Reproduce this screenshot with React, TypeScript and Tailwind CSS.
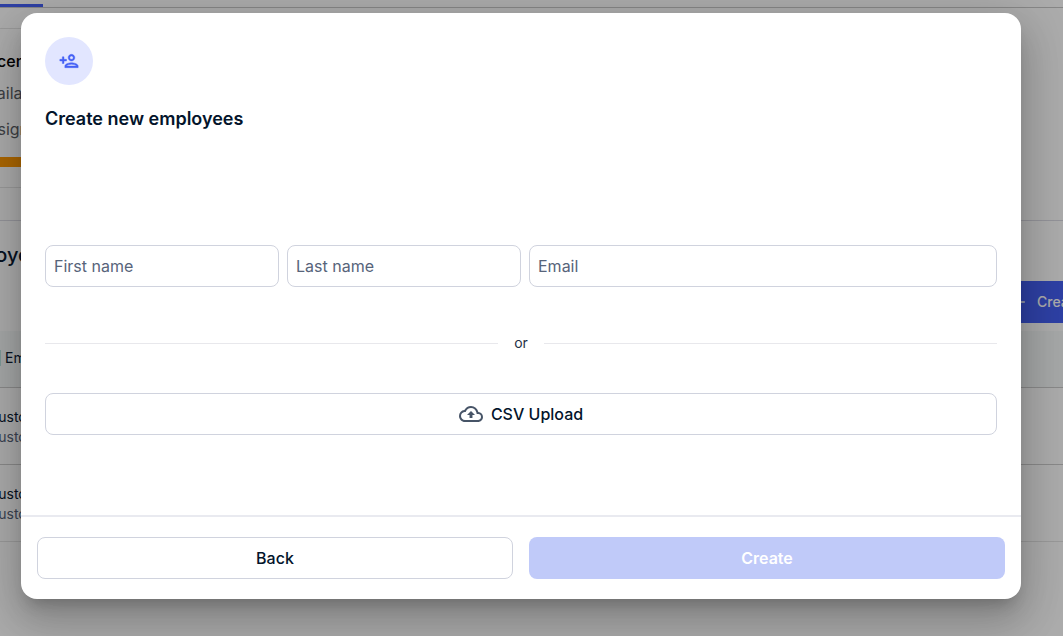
import { useState } from "react";
import { MdAdd, MdOutlineCloudUpload } from "react-icons/md";

const CUSTOMERS = [
  { id: 1, name: "Customer One", detail: "Customer account" },
  { id: 2, name: "Customer Two", detail: "Customer account" },
];

const inputClass =
  "h-[42px] w-full min-w-0 rounded-lg border border-[#d0d3de] bg-white px-2 text-[#0b1b33] placeholder:text-[#57647a] placeholder:opacity-100";

function PersonAddIcon() {
  return (
    <svg
      viewBox="0 0 24 24"
      className="size-5"
      fill="currentColor"
      stroke="currentColor"
      strokeWidth="0.5"
      aria-hidden="true"
    >
      <path d="M15 12c2.21 0 4-1.79 4-4s-1.79-4-4-4-4 1.79-4 4 1.79 4 4 4zm0-6c1.1 0 2 .9 2 2s-.9 2-2 2-2-.9-2-2 .9-2 2-2zm0 8c-2.67 0-8 1.34-8 4v2h16v-2c0-2.66-5.33-4-8-4zm-6 4c.22-.72 3.31-2 6-2 2.7 0 5.8 1.29 6 2H9zm-3-3v-3h3v-2H6V7H4v3H1v2h3v3h2z" />
    </svg>
  );
}

function EmployeesPage() {
  return (
    <div className="min-h-screen overflow-hidden bg-white text-[#0b1b33]">
      <div className="h-2 border-b border-[#c8c8c8]">
        <div className="h-[7px] w-[43px] border-b-[3px] border-[#4560f5]" />
      </div>

      <section className="mt-5 h-40 w-1/3 border-y border-[#e4e4e4] pt-5">
        <h2 className="-ml-4 text-base leading-6 font-medium text-black">Licenses</h2>
        <p className="-ml-[22px] mt-2 leading-6 text-[#5c5f66]">Available</p>
        <p className="-ml-[22px] mt-3 leading-6 text-[#5c5f66]">Assigned</p>
        <div className="mt-4 h-2.5 bg-[#ff9800]" />
      </section>

      <section className="mt-8 border-t border-[#dcdce4] pt-5">
        <h2 className="-ml-[52px] text-xl leading-7 font-medium">Employees</h2>
        <div className="mt-3 flex justify-end">
          <button
            type="button"
            className="flex h-[42px] w-[70px] items-center gap-2 overflow-hidden bg-[#4560f5] pl-4 font-medium text-white"
          >
            <MdAdd className="size-5 shrink-0" />
            <span className="text-sm">Create</span>
          </button>
        </div>
        <table className="mt-2 w-full text-left text-sm">
          <thead className="h-14 border-b border-[#cdcdcd] bg-[#f6faf9]">
            <tr>
              <th className="pb-0.5 font-normal">
                <div className="border-l border-[#b9e4e2] pl-1 leading-4">Employee</div>
              </th>
            </tr>
          </thead>
          <tbody>
            {CUSTOMERS.map((customer) => (
              <tr key={customer.id} className="h-[77px] border-b border-[#cdcdcd] last:border-[#e4e4e4]">
                <td className="pt-0.5">
                  <div className="-ml-3 leading-5">{customer.name}</div>
                  <div className="-ml-3 leading-5 text-[#57647a]">{customer.detail}</div>
                </td>
              </tr>
            ))}
          </tbody>
        </table>
      </section>
    </div>
  );
}

function CreateEmployeesDialog() {
  const [firstName, setFirstName] = useState("");
  const [lastName, setLastName] = useState("");
  const [email, setEmail] = useState("");

  return (
    <div
      role="dialog"
      aria-modal="true"
      aria-labelledby="dialog-title"
      className="w-full max-w-[1000px] rounded-2xl bg-white text-[#03142b] shadow-[0_11px_15px_-7px_rgba(0,0,0,0.2),0_24px_38px_3px_rgba(0,0,0,0.14),0_9px_46px_8px_rgba(0,0,0,0.12)]"
    >
      <div className="px-6 pt-6 pb-20">
        <div className="flex size-12 items-center justify-center rounded-full bg-[#e2e6ff] text-[#4560f5]">
          <PersonAddIcon />
        </div>
        <h1 id="dialog-title" className="mt-5 text-lg leading-7 font-semibold">
          Create new employees
        </h1>

        <div className="mt-28 flex gap-2">
          <div className="flex-1">
            <input
              aria-label="First name"
              placeholder="First name"
              value={firstName}
              onChange={(e) => setFirstName(e.target.value)}
              className={inputClass}
            />
          </div>
          <div className="flex-1">
            <input
              aria-label="Last name"
              placeholder="Last name"
              value={lastName}
              onChange={(e) => setLastName(e.target.value)}
              className={inputClass}
            />
          </div>
          <div className="flex-2">
            <input
              type="email"
              aria-label="Email"
              placeholder="Email"
              value={email}
              onChange={(e) => setEmail(e.target.value)}
              className={inputClass}
            />
          </div>
        </div>

        <div className="mt-[46px] flex items-center gap-4 text-sm leading-5 text-[#1f2f46]">
          <div className="h-px flex-1 bg-[#e8e8ec]" />
          or
          <div className="h-px flex-1 bg-[#e8e8ec]" />
        </div>

        <button
          type="button"
          className="mt-10 flex h-[42px] w-full items-center justify-center gap-2 rounded-lg border border-[#d0d3de] font-medium"
        >
          <MdOutlineCloudUpload className="size-6 text-[#475467]" />
          CSV Upload
        </button>
      </div>

      <div className="grid grid-cols-2 gap-4 border-t-2 border-[#e9eaf0] px-4 py-5">
        <button type="button" className="h-[42px] rounded-lg border border-[#d0d3de] font-medium">
          Back
        </button>
        <button type="button" disabled className="h-[42px] rounded-lg bg-[#c0caf9] font-semibold text-white">
          Create
        </button>
      </div>
    </div>
  );
}

export default function App() {
  return (
    <div className="relative h-screen overflow-hidden font-['Inter',sans-serif]">
      <EmployeesPage />
      <div className="absolute inset-0 flex items-start justify-center bg-black/33 pt-[13px] pr-[42px] pl-[21px]">
        <CreateEmployeesDialog />
      </div>
    </div>
  );
}
